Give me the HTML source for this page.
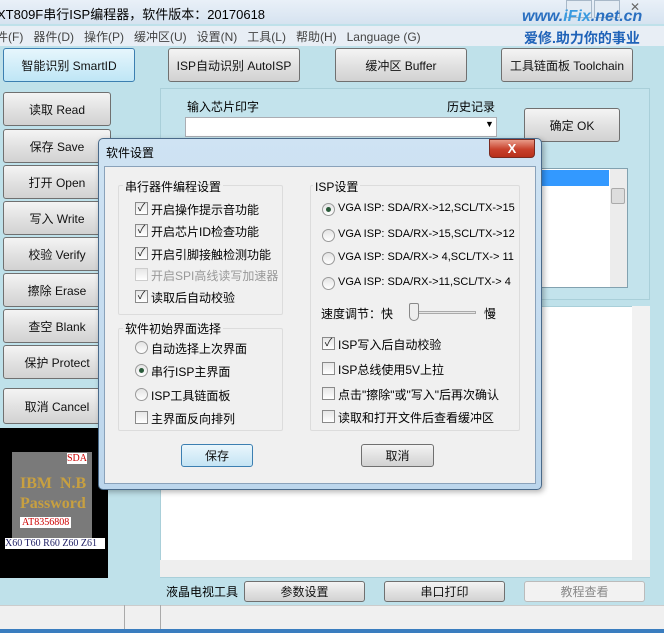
<!DOCTYPE html>
<html><head><meta charset="utf-8"><style>
*{box-sizing:border-box;margin:0;padding:0}
body{width:664px;height:633px;overflow:hidden;background:#bfe1ea;font-family:"Liberation Sans","Noto Sans CJK SC",sans-serif;font-size:12px;color:#000;position:relative}
.a{position:absolute}
.btn{position:absolute;border:1px solid #707070;border-radius:3px;background:linear-gradient(#f4f4f4,#e2e2e2 50%,#d2d2d2);display:flex;align-items:center;justify-content:center;font-size:12px;color:#111}
.cb{position:absolute;width:13px;height:13px;border:1px solid #8a8a8a;background:linear-gradient(#e6e6e6,#fff);font-size:11px;line-height:11px;text-align:center;color:#222}
.rd{position:absolute;width:13px;height:13px;border:1px solid #9a9a9a;border-radius:50%;background:linear-gradient(#e4e4e4,#fff)}
.rd.on:after{content:"";position:absolute;left:3px;top:3px;width:5px;height:5px;border-radius:50%;background:#2a5a3a}
.t{position:absolute;white-space:nowrap;font-size:12px}
.grp{position:absolute;border:1px solid #dcdcdc;border-radius:2px}
</style></head><body>
<!-- title bar -->
<div class="a" style="left:0;top:0;width:664px;height:24px;background:linear-gradient(#e9f0f8,#d6e3f0)"></div>
<div class="t" style="left:-3px;top:4px;font-size:13px">XT809F串行ISP编程器，软件版本：20170618</div>
<div class="a" style="left:566px;top:0;width:26px;height:18px;border:1px solid #a8b8c8;background:#e4ecf4"></div>
<div class="a" style="left:594px;top:0;width:26px;height:18px;border:1px solid #a8b8c8;background:#e4ecf4"></div>
<div class="t" style="left:630px;top:0;color:#666">✕</div>
<!-- menu -->
<div class="a" style="left:0;top:26px;width:664px;height:20px;background:#e8eef5"></div>
<div class="t" style="left:-4px;top:28px;color:#444">件(F)&nbsp;&nbsp;&nbsp;器件(D)&nbsp;&nbsp;&nbsp;操作(P)&nbsp;&nbsp;&nbsp;缓冲区(U)&nbsp;&nbsp;&nbsp;设置(N)&nbsp;&nbsp;&nbsp;工具(L)&nbsp;&nbsp;&nbsp;帮助(H)&nbsp;&nbsp;&nbsp;Language (G)</div>
<div class="t" style="left:522px;top:8px;font-size:16px;font-style:italic;font-weight:bold;color:#2a6fc0">www.<span style="color:#3b9be0">iFix</span>.net.cn</div>
<div class="t" style="left:524px;top:28px;font-size:14px;font-weight:bold;color:#1f62b8">爱修.助力你的事业</div>
<!-- top buttons -->
<div class="btn" style="left:3px;top:48px;width:132px;height:34px;background:linear-gradient(#e6f6fc,#bfe6f6);border-color:#3c7fb1">智能识别 SmartID</div>
<div class="btn" style="left:168px;top:48px;width:132px;height:34px">ISP自动识别 AutoISP</div>
<div class="btn" style="left:335px;top:48px;width:132px;height:34px">缓冲区 Buffer</div>
<div class="btn" style="left:501px;top:48px;width:132px;height:34px">工具链面板 Toolchain</div>
<!-- left buttons -->
<div class="btn" style="left:3px;top:92px;width:108px;height:34px">读取 Read</div>
<div class="btn" style="left:3px;top:129px;width:108px;height:34px">保存 Save</div>
<div class="btn" style="left:3px;top:165px;width:108px;height:34px">打开 Open</div>
<div class="btn" style="left:3px;top:201px;width:108px;height:34px">写入 Write</div>
<div class="btn" style="left:3px;top:237px;width:108px;height:34px">校验 Verify</div>
<div class="btn" style="left:3px;top:273px;width:108px;height:34px">擦除 Erase</div>
<div class="btn" style="left:3px;top:309px;width:108px;height:34px">查空 Blank</div>
<div class="btn" style="left:3px;top:345px;width:108px;height:34px">保护 Protect</div>
<div class="btn" style="left:3px;top:388px;width:108px;height:36px">取消 Cancel</div>
<!-- chip image -->
<div class="a" style="left:0;top:428px;width:108px;height:150px;background:#000"></div>
<div class="a" style="left:12px;top:452px;width:80px;height:95px;background:#7a7a7a"></div>
<div class="t" style="left:67px;top:453px;font-size:10px;background:#fff;color:#c00;font-family:'Liberation Serif',serif">SDA</div>
<div class="t" style="left:20px;top:475px;font-size:16px;font-weight:bold;color:#c8a040;font-family:'Liberation Serif',serif">IBM&nbsp;&nbsp;N.B</div>
<div class="t" style="left:20px;top:495px;font-size:16px;font-weight:bold;color:#c8a040;font-family:'Liberation Serif',serif">Password</div>
<div class="t" style="left:20px;top:517px;font-size:10px;background:#fff;color:#c00;padding:0 2px;font-family:'Liberation Serif',serif">AT8356808</div>
<div class="t" style="left:5px;top:538px;width:100px;font-size:10px;background:#fff;color:#226;font-family:'Liberation Serif',serif">X60 T60 R60 Z60 Z61</div>
<!-- right group -->
<div class="a" style="left:160px;top:88px;width:490px;height:212px;border:1px solid #a9cfd9;background:#c3e3ec"></div>
<div class="t" style="left:187px;top:98px">输入芯片印字</div>
<div class="t" style="left:447px;top:98px">历史记录</div>
<div class="a" style="left:185px;top:117px;width:312px;height:20px;background:#fff;border:1px solid #abadb3"></div>
<div class="t" style="left:485px;top:119px;font-size:9px">▼</div>
<div class="btn" style="left:524px;top:108px;width:96px;height:34px">确定 OK</div>
<div class="a" style="left:540px;top:168px;width:88px;height:120px;background:#fff;border:1px solid #82a2b0"></div>
<div class="a" style="left:541px;top:170px;width:68px;height:16px;background:#3399ff"></div>
<div class="a" style="left:610px;top:169px;width:17px;height:118px;background:#ececec"></div>
<div class="a" style="left:611px;top:188px;width:14px;height:16px;background:#ddd;border:1px solid #aaa;border-radius:2px"></div>
<!-- lower text area -->
<div class="a" style="left:160px;top:306px;width:490px;height:272px;background:#fff;border:1px solid #a9cfd9"></div>
<div class="a" style="left:160px;top:560px;width:490px;height:17px;background:#eee"></div>
<div class="a" style="left:632px;top:306px;width:18px;height:254px;background:#f2f2f2"></div>
<!-- bottom row -->
<div class="t" style="left:166px;top:583px">液晶电视工具</div>
<div class="btn" style="left:244px;top:581px;width:121px;height:21px">参数设置</div>
<div class="btn" style="left:384px;top:581px;width:121px;height:21px">串口打印</div>
<div class="btn" style="left:524px;top:581px;width:121px;height:21px;color:#888;background:#f2f2f2;border-color:#bbb">教程查看</div>
<!-- status -->
<div class="a" style="left:0;top:605px;width:664px;height:24px;background:#f0f0f0;border-top:1px solid #ccc"></div>
<div class="a" style="left:124px;top:605px;width:1px;height:24px;background:#aaa"></div>
<div class="a" style="left:160px;top:605px;width:1px;height:24px;background:#aaa"></div>
<div class="a" style="left:0;top:629px;width:664px;height:4px;background:#3a7dbf"></div>

<!-- dialog -->
<div class="a" style="left:98px;top:138px;width:444px;height:352px;border:1px solid #4a6a8a;border-radius:5px;background:linear-gradient(#cfe3f3,#bcd6ec);box-shadow:2px 2px 6px rgba(0,0,0,.3)"></div>
<div class="t" style="left:106px;top:144px">软件设置</div>
<div class="a" style="left:489px;top:139px;width:46px;height:19px;border:1px solid #7a2a20;border-radius:0 0 4px 4px;background:linear-gradient(#e89a88,#c8412c 55%,#b8301c);color:#fff;font-weight:bold;font-size:13px;text-align:center;line-height:17px">X</div>
<div class="a" style="left:104px;top:166px;width:432px;height:318px;background:#f0f0f0;border:1px solid #8aa2ba"></div>
<div class="grp" style="left:118px;top:185px;width:165px;height:130px"></div>
<div class="t" style="left:123px;top:178px;background:#f0f0f0;padding:0 2px">串行器件编程设置</div>
<div class="cb" style="left:135px;top:202px">✓</div><div class="t" style="left:151px;top:201px">开启操作提示音功能</div>
<div class="cb" style="left:135px;top:224px">✓</div><div class="t" style="left:151px;top:223px">开启芯片ID检查功能</div>
<div class="cb" style="left:135px;top:247px">✓</div><div class="t" style="left:151px;top:246px">开启引脚接触检测功能</div>
<div class="cb" style="left:135px;top:268px;border-color:#ccc"></div><div class="t" style="left:151px;top:267px;color:#999">开启SPI高线读写加速器</div>
<div class="cb" style="left:135px;top:290px">✓</div><div class="t" style="left:151px;top:289px">读取后自动校验</div>
<div class="grp" style="left:118px;top:328px;width:165px;height:103px"></div>
<div class="t" style="left:123px;top:320px;background:#f0f0f0;padding:0 2px">软件初始界面选择</div>
<div class="rd" style="left:135px;top:341px"></div><div class="t" style="left:151px;top:340px">自动选择上次界面</div>
<div class="rd on" style="left:135px;top:364px"></div><div class="t" style="left:151px;top:363px">串行ISP主界面</div>
<div class="rd" style="left:135px;top:388px"></div><div class="t" style="left:151px;top:387px">ISP工具链面板</div>
<div class="cb" style="left:135px;top:411px"></div><div class="t" style="left:151px;top:410px">主界面反向排列</div>
<div class="grp" style="left:310px;top:185px;width:210px;height:246px"></div>
<div class="t" style="left:313px;top:178px;background:#f0f0f0;padding:0 2px">ISP设置</div>
<div class="rd on" style="left:322px;top:203px"></div><div class="t" style="left:338px;top:202px;font-size:11px">VGA ISP: SDA/RX-&gt;12,SCL/TX-&gt;15</div>
<div class="rd" style="left:322px;top:229px"></div><div class="t" style="left:338px;top:228px;font-size:11px">VGA ISP: SDA/RX-&gt;15,SCL/TX-&gt;12</div>
<div class="rd" style="left:322px;top:252px"></div><div class="t" style="left:338px;top:251px;font-size:11px">VGA ISP: SDA/RX-&gt; 4,SCL/TX-&gt; 11</div>
<div class="rd" style="left:322px;top:277px"></div><div class="t" style="left:338px;top:276px;font-size:11px">VGA ISP: SDA/RX-&gt;11,SCL/TX-&gt;  4</div>
<div class="t" style="left:321px;top:305px">速度调节：快</div>
<div class="a" style="left:412px;top:311px;width:64px;height:3px;border:1px solid #aaa;background:#e6e6e6"></div>
<div class="a" style="left:409px;top:303px;width:10px;height:18px;border:1px solid #888;border-radius:2px 2px 5px 5px;background:#eee"></div>
<div class="t" style="left:484px;top:305px">慢</div>
<div class="cb" style="left:322px;top:337px">✓</div><div class="t" style="left:338px;top:336px">ISP写入后自动校验</div>
<div class="cb" style="left:322px;top:362px"></div><div class="t" style="left:338px;top:361px">ISP总线使用5V上拉</div>
<div class="cb" style="left:322px;top:387px"></div><div class="t" style="left:338px;top:386px">点击"擦除"或"写入"后再次确认</div>
<div class="cb" style="left:322px;top:410px"></div><div class="t" style="left:338px;top:409px">读取和打开文件后查看缓冲区</div>
<div class="btn" style="left:181px;top:444px;width:72px;height:23px;border-color:#3c7fb1;background:linear-gradient(#eaf6fc,#c4e4f4)">保存</div>
<div class="btn" style="left:361px;top:444px;width:73px;height:23px">取消</div>
</body></html>
